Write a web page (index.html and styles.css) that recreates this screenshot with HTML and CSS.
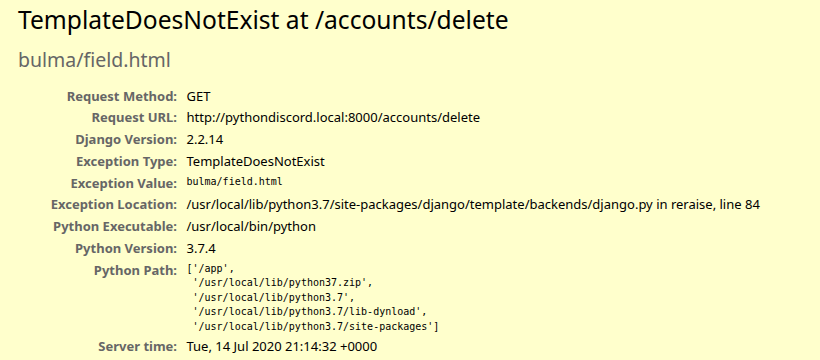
FILE: index.html
```html
<!DOCTYPE html>
<html>
<head>
<meta charset="utf-8">
<title>TemplateDoesNotExist at /accounts/delete</title>
<link rel="stylesheet" href="styles.css">
</head>
<body>
<div class="summary">
  <h1 class="title">TemplateDoesNotExist at /accounts/delete</h1>
  <pre class="exception-value">bulma/field.html</pre>
  <table class="meta">
    <tr><th>Request Method:</th><td>GET</td></tr>
    <tr><th>Request URL:</th><td>http://pythondiscord.local:8000/accounts/delete</td></tr>
    <tr><th>Django Version:</th><td>2.2.14</td></tr>
    <tr><th>Exception Type:</th><td>TemplateDoesNotExist</td></tr>
    <tr><th>Exception Value:</th><td><pre class="code">bulma/field.html</pre></td></tr>
    <tr><th>Exception Location:</th><td>/usr/local/lib/python3.7/site-packages/django/template/backends/django.py in reraise, line 84</td></tr>
    <tr><th>Python Executable:</th><td>/usr/local/bin/python</td></tr>
    <tr><th>Python Version:</th><td>3.7.4</td></tr>
    <tr><th>Python Path:</th><td><pre class="code">['/app',
 '/usr/local/lib/python37.zip',
 '/usr/local/lib/python3.7',
 '/usr/local/lib/python3.7/lib-dynload',
 '/usr/local/lib/python3.7/site-packages']</pre></td></tr>
    <tr><th>Server time:</th><td>Tue, 14 Jul 2020 21:14:32 +0000</td></tr>
  </table>
</div>
</body>
</html>
```

FILE: styles.css
```css
html, body, div, h1, pre, table, tr, th, td {
  margin: 0;
  padding: 0;
}
body {
  font-family: "Noto Sans", sans-serif;
  font-size: 13px;
  background: #ffffcc;
  color: #000;
}
.summary {
  background: #ffffcc;
  padding: 3px 18px 10px;
  border-bottom: 1px solid #ddd;
}
.title {
  font-weight: normal;
  font-size: 24.6px;
  margin-bottom: 10px;
}
.exception-value {
  font-family: "Noto Sans", sans-serif;
  font-size: 19.5px;
  color: #666;
  margin: 10px 0 12.5px;
  white-space: pre-wrap;
}
.meta {
  border: none;
  border-collapse: collapse;
  width: 100%;
}
.meta th, .meta td {
  vertical-align: top;
  padding: 2px 3px;
  line-height: 17.8px;
}
.meta th {
  width: 12em;
  text-align: right;
  color: #666;
  padding-right: 6.5px;
  font-weight: bold;
}
.code {
  font-family: "DejaVu Sans Mono", monospace;
  font-size: 10px;
  line-height: 14.4px;
}
```
